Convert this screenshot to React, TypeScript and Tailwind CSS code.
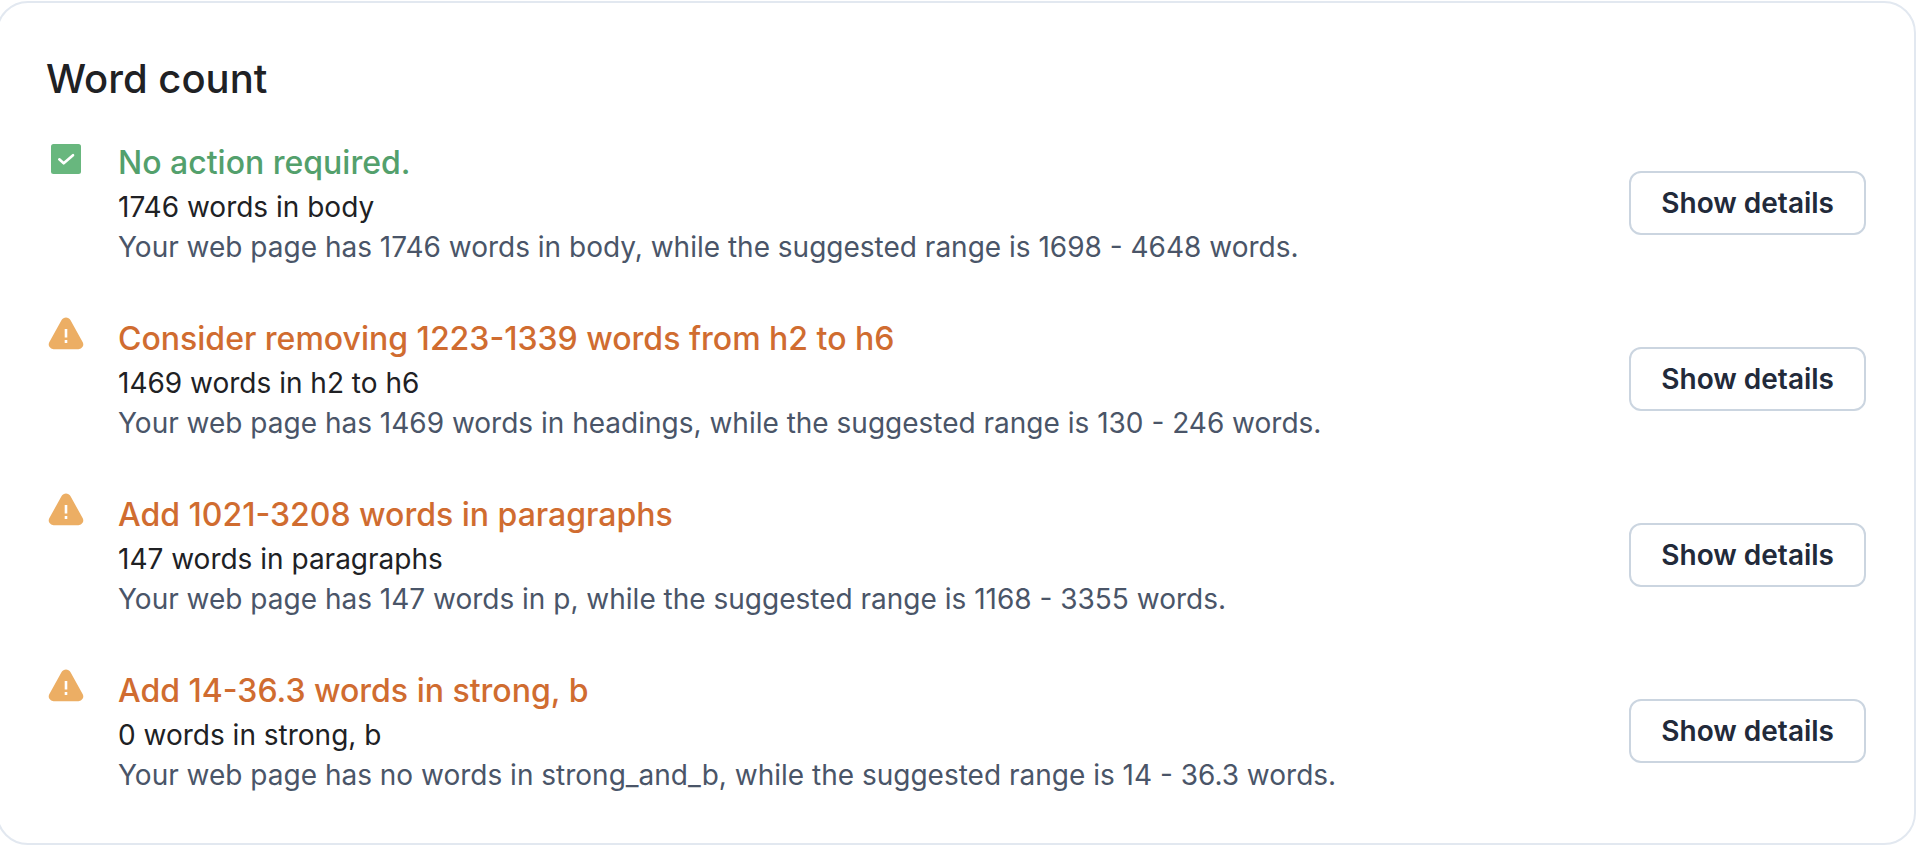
interface Check {
  status: 'ok' | 'warning'
  title: string
  summary: string
  description: string
}

const checks: Check[] = [
  {
    status: 'ok',
    title: 'No action required.',
    summary: '1746 words in body',
    description: 'Your web page has 1746 words in body, while the suggested range is 1698 - 4648 words.',
  },
  {
    status: 'warning',
    title: 'Consider removing 1223-1339 words from h2 to h6',
    summary: '1469 words in h2 to h6',
    description: 'Your web page has 1469 words in headings, while the suggested range is 130 - 246 words.',
  },
  {
    status: 'warning',
    title: 'Add 1021-3208 words in paragraphs',
    summary: '147 words in paragraphs',
    description: 'Your web page has 147 words in p, while the suggested range is 1168 - 3355 words.',
  },
  {
    status: 'warning',
    title: 'Add 14-36.3 words in strong, b',
    summary: '0 words in strong, b',
    description: 'Your web page has no words in strong_and_b, while the suggested range is 14 - 36.3 words.',
  },
]

function OkIcon() {
  return (
    <svg className="h-10 w-10" viewBox="0 0 40 40" aria-hidden="true">
      <rect x="5" y="5" width="30" height="30" rx="2.5" fill="#68b77e" />
      <path
        d="M13.300 20.300l4.400 4L27 16.200"
        fill="none"
        stroke="#fff"
        strokeWidth="2.6"
        strokeLinecap="round"
        strokeLinejoin="round"
      />
    </svg>
  )
}

function WarningIcon() {
  return (
    <svg className="h-10 w-10" viewBox="0 0 40 40" aria-hidden="true">
      <path
        d="M15.6 5a5.1 5.1 0 0 1 8.8 0l12.2 22a4.8 4.8 0 0 1-4.200 7.200H7.600a4.800 4.800 0 0 1-4.200-7.200z"
        fill="#ecae64"
      />
      <path d="M20 14v8.500M20 25v3" fill="none" stroke="#fff" strokeWidth="2.6" />
    </svg>
  )
}

function CheckRow({ check }: { check: Check }) {
  const ok = check.status === 'ok'

  return (
    <li className="flex items-center">
      <div className="w-18 shrink-0 self-start">{ok ? <OkIcon /> : <WarningIcon />}</div>
      <div className="flex-1">
        <h3 className={`text-[32px] leading-12 font-medium ${ok ? 'text-[#53a06c]' : 'text-[#d06c30]'}`}>
          {check.title}
        </h3>
        <p className="text-[28px] leading-10 text-[#202124]">{check.summary}</p>
        <p className="text-[28px] leading-10 text-[#4a5568]">{check.description}</p>
      </div>
      <button
        type="button"
        className="h-16 rounded-xl border-2 border-[#cbd5e0] bg-white px-[30px] text-[28px] font-semibold text-[#222a3a]"
      >
        Show details
      </button>
    </li>
  )
}

export default function App() {
  return (
    <section className="mt-px mr-0.5 -ml-1 rounded-[32px] border-2 border-[#e2e8f0] bg-white p-12 font-['Inter',sans-serif]">
      <h2 className="text-[40px] leading-14 font-medium text-[#202124]">Word count</h2>
      <ul className="mt-8 space-y-12">
        {checks.map((check) => (
          <CheckRow key={check.title} check={check} />
        ))}
      </ul>
    </section>
  )
}
